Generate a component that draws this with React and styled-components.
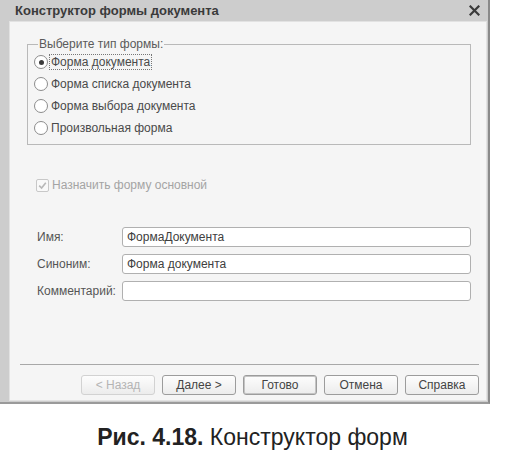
import styled, { createGlobalStyle } from "styled-components";

const GlobalStyle = createGlobalStyle`
  html, body {
    margin: 0;
    padding: 0;
    background: #ffffff;
  }
  body {
    font-family: "Liberation Sans", Arial, sans-serif;
  }
`;

const formTypes = [
  "Форма документа",
  "Форма списка документа",
  "Форма выбора документа",
  "Произвольная форма",
];

const fields = [
  { label: "Имя:", value: "ФормаДокумента" },
  { label: "Синоним:", value: "Форма документа" },
  { label: "Комментарий:", value: "" },
];

const buttons = [
  { text: "< Назад", disabled: true },
  { text: "Далее >" },
  { text: "Готово", primary: true },
  { text: "Отмена" },
  { text: "Справка" },
];

export default function App() {
  return (
    <Page>
      <GlobalStyle />
      <Window>
        <TitleBar>
          <Title>Конструктор формы документа</Title>
          <Close>
            <svg width="11" height="11" viewBox="0 0 11 11">
              <path
                d="M1.5 1.5 L9.5 9.5 M9.5 1.5 L1.5 9.5"
                stroke="#3a3a3a"
                strokeWidth="2.2"
                strokeLinecap="square"
              />
            </svg>
          </Close>
        </TitleBar>
        <Body>
          <GroupBox>
            <Legend>Выберите тип формы:</Legend>
            {formTypes.map((t, i) => (
              <OptionRow key={t}>
                <Radio checked={i === 0} />
                <OptionLabel focused={i === 0}>{t}</OptionLabel>
              </OptionRow>
            ))}
          </GroupBox>
          <CheckRow>
            <CheckBox>
              <svg width="9" height="9" viewBox="0 0 9 9">
                <path
                  d="M1.2 4.6 L3.6 7 L7.8 1.8"
                  stroke="#b8b8b8"
                  strokeWidth="1.6"
                  fill="none"
                />
              </svg>
            </CheckBox>
            <CheckLabel>Назначить форму основной</CheckLabel>
          </CheckRow>
          <Fields>
            {fields.map((f) => (
              <FieldRow key={f.label}>
                <FieldLabel>{f.label}</FieldLabel>
                <Input>{f.value}</Input>
              </FieldRow>
            ))}
          </Fields>
          <Spacer />
          <Separator />
          <ButtonBar>
            {buttons.map((b) => (
              <Button key={b.text} disabled={b.disabled} primary={b.primary}>
                {b.text}
              </Button>
            ))}
          </ButtonBar>
        </Body>
      </Window>
      <Caption>
        <b>Рис. 4.18.</b> Конструктор форм
      </Caption>
    </Page>
  );
}

const Page = styled.div`
  width: 505px;
  height: 466px;
  background: #ffffff;
  overflow: hidden;
`;

const Window = styled.div`
  width: 490px;
  background: #cdcdcd;
  border-right: 2px solid #8a8a8a;
  border-bottom: 2px solid #9a9a9a;
  box-sizing: border-box;
  display: flex;
  flex-direction: column;
`;

const TitleBar = styled.div`
  height: 21px;
  display: flex;
  align-items: center;
  justify-content: space-between;
  padding: 0 8px 0 15px;
`;

const Title = styled.span`
  font-size: 13px;
  font-weight: 700;
  color: #3a3a3a;
`;

const Close = styled.span`
  display: flex;
  align-items: center;
`;

const Body = styled.div`
  margin: 0 1px 1px 9px;
  height: 380px;
  background: #f5f5f5;
  border: 1px solid #e2e2e2;
  display: flex;
  flex-direction: column;
  padding: 15px 15px 5px 17px;
  box-sizing: border-box;
`;

const GroupBox = styled.fieldset`
  margin: 0;
  padding: 0 0 5px 6px;
  border: 1px solid #b9b9b9;
  display: flex;
  flex-direction: column;
`;

const Legend = styled.legend`
  font-size: 12px;
  color: #5a5a5a;
  padding: 0 1px;
  margin-left: 4px;
  line-height: 14px;
`;

const OptionRow = styled.div`
  height: 22px;
  display: flex;
  align-items: center;
  gap: 2px;
`;

const Radio = styled.span`
  width: 12px;
  height: 12px;
  border-radius: 50%;
  border: 1px solid #8c8c8c;
  background: #ffffff;
  display: flex;
  align-items: center;
  justify-content: center;
  &::after {
    content: "";
    width: 5px;
    height: 5px;
    border-radius: 50%;
    background: ${(p) => (p.checked ? "#3a3a3a" : "transparent")};
  }
`;

const OptionLabel = styled.span`
  font-size: 12px;
  color: #4a4a4a;
  padding: 0 1px;
  outline: ${(p) => (p.focused ? "1px dotted #777" : "none")};
  line-height: 14px;
`;

const CheckRow = styled.div`
  margin-top: 30px;
  margin-left: 9px;
  height: 20px;
  display: flex;
  align-items: center;
  gap: 3px;
`;

const CheckBox = styled.span`
  width: 11px;
  height: 11px;
  border: 1px solid #c8c8c8;
  border-radius: 2px;
  background: #f9f9f9;
  display: flex;
  align-items: center;
  justify-content: center;
`;

const CheckLabel = styled.span`
  font-size: 12px;
  color: #a4a4a4;
`;

const Fields = styled.div`
  margin-top: 32px;
  display: flex;
  flex-direction: column;
  gap: 7px;
`;

const FieldRow = styled.div`
  display: flex;
  align-items: center;
  padding-left: 10px;
`;

const FieldLabel = styled.span`
  width: 85px;
  font-size: 12px;
  color: #555555;
`;

const Input = styled.div`
  flex: 1;
  height: 20px;
  box-sizing: border-box;
  border: 1px solid #b0b0b0;
  border-radius: 3px;
  background: #ffffff;
  font-size: 12px;
  color: #404040;
  padding: 0 4px;
  display: flex;
  align-items: center;
`;

const Spacer = styled.div`
  flex: 1;
`;

const Separator = styled.div`
  height: 1px;
  background: #a8a8a8;
  margin: 0 -8px 10px -7px;
`;

const ButtonBar = styled.div`
  display: flex;
  justify-content: flex-end;
  gap: 7px;
  margin-right: -8px;
`;

const Button = styled.div`
  width: 74px;
  height: 20px;
  box-sizing: border-box;
  border: 1px solid ${(p) => (p.disabled ? "#d2d2d2" : "#9c9c9c")};
  border-radius: 3px;
  background: linear-gradient(#fdfdfd, #ececec);
  box-shadow: ${(p) => (p.primary ? "inset 0 0 0 1px #c4c4c4" : "none")};
  display: flex;
  align-items: center;
  justify-content: center;
  font-size: 12px;
  color: ${(p) => (p.disabled ? "#b4b4b4" : "#444444")};
`;

const Caption = styled.div`
  margin-top: 20px;
  text-align: center;
  font-size: 23px;
  color: #222222;
  b {
    font-weight: 700;
  }
`;
